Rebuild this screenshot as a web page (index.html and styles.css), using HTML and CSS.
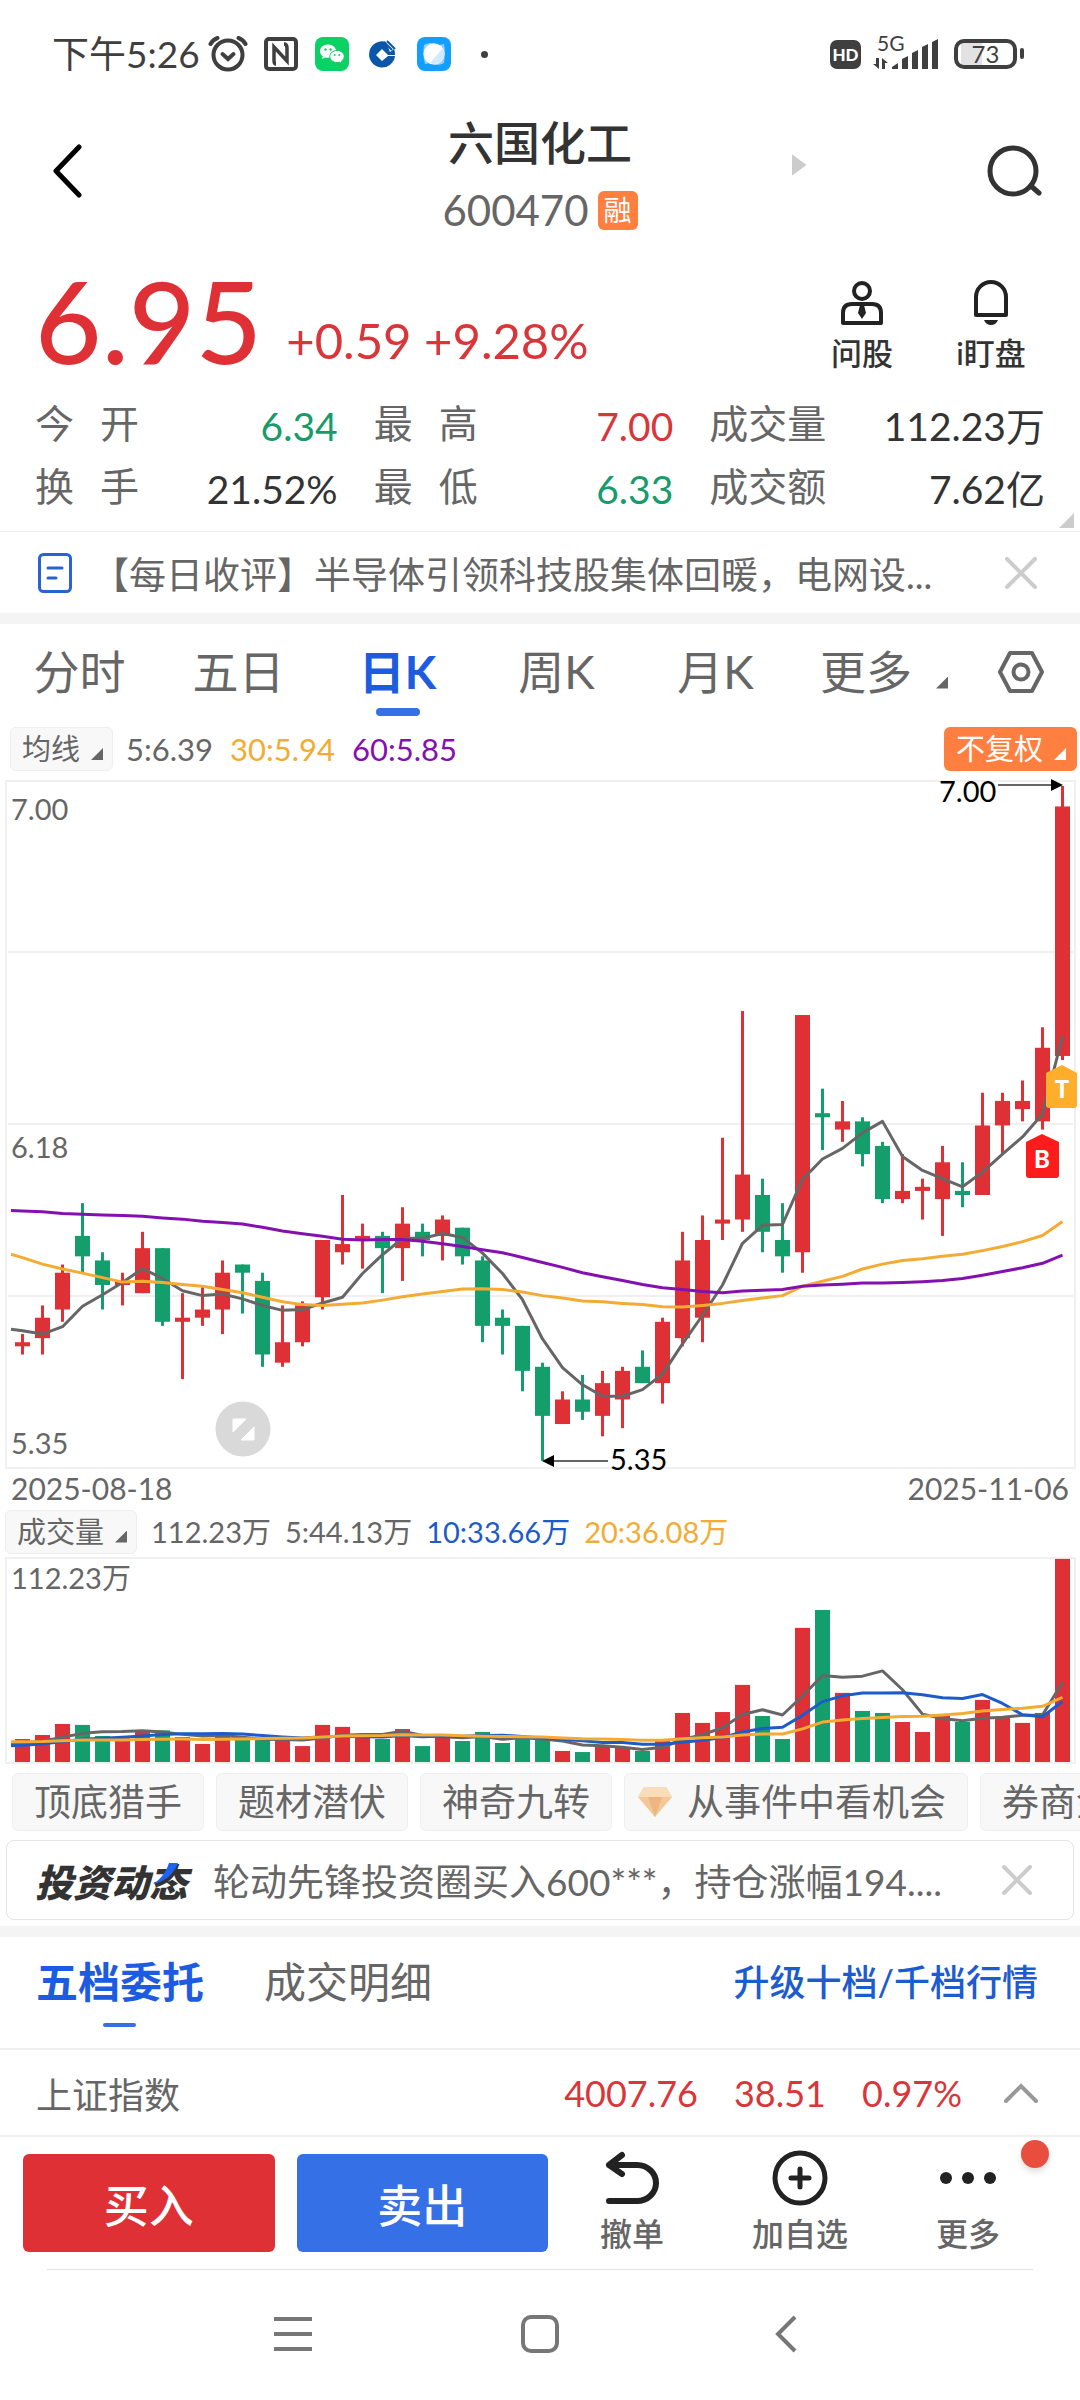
FILE: index.html
```
<!DOCTYPE html>
<html lang="zh-CN">
<head>
    <meta charset="UTF-8">
    <title>六国化工 600470</title>
    <meta name="viewport" content="width=device-width, initial-scale=1">
    <link rel="stylesheet" href="styles.css">
</head>
<body>
    <div class="status-bar">
        <span class="clock">下午5:26</span>
        <svg class="st-icon" viewBox="0 0 40 36" width="40" height="36" fill="none" stroke="#3f3f3f" stroke-width="4" stroke-linecap="round">
            <circle cx="20" cy="19" r="14.5"/>
            <path d="M14.5 18l5.5 5 5.5-5"/>
            <path d="M2.5 8C4 5 6.5 3 9.5 2M37.5 8C36 5 33.5 3 30.5 2"/>
        </svg>
        <svg class="st-icon nfc" viewBox="0 0 34 34" width="34" height="34" fill="none" stroke="#3f3f3f">
            <rect x="2" y="2" width="30" height="30" rx="3" stroke-width="4"/>
            <path d="M12 27c-2 0-2-2-2-4V10l13 14V12M20 7c2 0 3 1 3 4v13" stroke-width="3.5"/>
        </svg>
        <svg class="st-icon app" viewBox="0 0 34 34" width="34" height="34">
            <rect width="34" height="34" rx="8" fill="#0ad264"/>
            <path d="M13 7.5c-4.6 0-8 3-8 6.7 0 2 1 3.8 2.8 5L7 22l3.2-1.6c1 .2 1.8.4 2.9.4 4.5 0 8-3 8-6.7 0-3.6-3.5-6.6-8.1-6.6z" fill="#fff"/>
            <path d="M22 13.5c-4 0-7.2 2.6-7.2 6s3.2 6 7.2 6c.8 0 1.6-.1 2.3-.3L27 26.5l-.6-2.3c1.7-1.1 2.9-2.7 2.9-4.7 0-3.4-3.3-6-7.3-6z" fill="#fff" stroke="#0ad264"/>
            <g fill="#0ad264"><circle cx="10.5" cy="12.5" r="1.2"/><circle cx="15.7" cy="12.5" r="1.2"/><circle cx="19.7" cy="18" r="1"/><circle cx="24.3" cy="18" r="1"/></g>
        </svg>
        <svg class="st-icon app" viewBox="0 0 34 34" width="34" height="34">
            <path d="M20 5a13 13 0 1 0 9 14H22l-6 5-6-6 6-6 6 6h7A13 13 0 0 0 28 12l-4 3z" fill="#0a56a8"/>
            <path d="M18 5l8 8M21 4l8 8" stroke="#0a56a8" stroke-width="2"/>
        </svg>
        <svg class="st-icon app" viewBox="0 0 34 34" width="34" height="34">
            <rect width="34" height="34" rx="8" fill="#129fff"/>
            <path d="M7 8c6-3 12-2 15 0l5-1c1 5 1 10 0 19-5 3-11 2-14 0l-5 1C6 20 6 14 7 8z" fill="#8fd0ff"/>
            <circle cx="17" cy="17" r="10.5" fill="#fff"/>
            <path d="M26 11a10.5 10.5 0 0 1-13 15z" fill="#d2eaff"/>
        </svg>
        <span class="more-dot"></span>
        <span class="hd">HD</span>
        <div class="signal">
            <span>5G</span>
            <svg viewBox="0 0 68 32" width="68" height="32" fill="#3f3f3f">
                <path d="M4 20h3v11L1 26h3zM10 31V20l6 5h-3v6z"/>
                <path d="M20 29l6-4v6h-6zM30 21l6-3v13h-6zM40 15l6-3v19h-6zM50 9l6-3v25h-6zM60 4l6-3v30h-6z"/>
            </svg>
        </div>
        <span class="battery">73</span>
    </div>

    <header class="top-bar">
        <button class="icon-btn back" aria-label="返回">
            <svg viewBox="0 0 30 54" width="30" height="54" fill="none" stroke="#000" stroke-width="5" stroke-linecap="round" stroke-linejoin="round"><path d="M27 3L4 27l23 24"/></svg>
        </button>
        <div class="stock">
            <h1>六国化工</h1>
            <div class="code">600470<span class="badge">融</span></div>
            <span class="next"></span>
        </div>
        <button class="icon-btn" aria-label="搜索">
            <svg viewBox="0 0 56 52" width="56" height="52" fill="none" stroke="#333" stroke-width="5" stroke-linecap="round"><circle cx="27" cy="26" r="23"/><path d="M45 41l8 7"/></svg>
        </button>
    </header>

    <section class="quote">
        <div class="price-row">
            <span class="price">6.95</span>
            <span class="change">+0.59 +9.28%</span>
            <button class="tool">
                <svg viewBox="0 0 44 46" width="44" height="46" fill="none" stroke="#222" stroke-width="4" stroke-linejoin="round"><circle cx="22" cy="11" r="8"/><path d="M3 43V33q0-9 9-9h20q9 0 9 9v10z"/><path d="M20 25h4l2 8-4 6-4-6z" fill="#222" stroke="none"/></svg>
                问股
            </button>
            <button class="tool">
                <svg viewBox="0 0 44 46" width="44" height="46" fill="none" stroke="#222" stroke-width="4" stroke-linejoin="round"><path d="M7 35V17a15 15 0 0 1 30 0v18z"/><path d="M15 40h14q-2 5-7 5t-7-5z" fill="#222" stroke="none"/></svg>
                i盯盘
            </button>
        </div>
        <dl class="stats">
            <div><dt><i>今</i><i>开</i></dt><dd class="down">6.34</dd></div>
            <div><dt><i>最</i><i>高</i></dt><dd class="up">7.00</dd></div>
            <div><dt>成交量</dt><dd>112.23万</dd></div>
            <div><dt><i>换</i><i>手</i></dt><dd>21.52%</dd></div>
            <div><dt><i>最</i><i>低</i></dt><dd class="down">6.33</dd></div>
            <div><dt>成交额</dt><dd>7.62亿</dd></div>
        </dl>
        <span class="corner"></span>
    </section>

    <div class="news">
        <svg viewBox="0 0 34 40" width="34" height="40" fill="none" stroke="#2a62d4" stroke-width="3" stroke-linecap="round"><rect x="1.5" y="1.5" width="31" height="37" rx="4"/><path d="M10 15h14M10 25h8"/></svg>
        <a href="#">【每日收评】半导体引领科技股集体回暖，电网设...</a>
        <button class="icon-btn" aria-label="关闭">
            <svg viewBox="0 0 32 32" width="32" height="32" stroke="#ccc" stroke-width="4" stroke-linecap="round"><path d="M2 2l28 28M30 2L2 30"/></svg>
        </button>
    </div>

    <nav class="period">
        <a href="#">分时</a>
        <a href="#">五日</a>
        <a href="#" class="active">日K</a>
        <a href="#">周K</a>
        <a href="#">月K</a>
        <a href="#" class="more">更多<span class="tri"></span></a>
        <button class="icon-btn" aria-label="设置">
            <svg viewBox="0 0 48 44" width="48" height="44" fill="none" stroke="#666" stroke-width="4" stroke-linejoin="round"><path d="M13 3h22l10 19-10 19H13L3 22z"/><circle cx="24" cy="22" r="7.5"/></svg>
        </button>
    </nav>

    <div class="legend ma-legend">
        <button class="chip">均线<span class="tri"></span></button>
        <span>5:6.39</span>
        <span class="yellow">30:5.94</span>
        <span class="purple">60:5.85</span>
        <button class="adjust">不复权<span class="tri"></span></button>
    </div>

    <svg id="kline" class="chart" viewBox="0 0 1080 690"></svg>
    <div class="dates"><span>2025-08-18</span><span>2025-11-06</span></div>

    <div class="legend">
        <button class="chip">成交量<span class="tri"></span></button>
        <span>112.23万</span>
        <span>5:44.13万</span>
        <span class="blue">10:33.66万</span>
        <span class="yellow">20:36.08万</span>
    </div>
    <svg id="volume" class="chart" viewBox="0 0 1080 210"></svg>

    <div class="tags">
        <a href="#">顶底猎手</a>
        <a href="#">题材潜伏</a>
        <a href="#">神奇九转</a>
        <a href="#" class="gem">
            <svg viewBox="0 0 34 30" width="34" height="30"><path d="M6 0h22l6 10-17 20L0 10z" fill="#f3c797"/><path d="M6 0h22l6 10H0z" fill="#f9dcb8"/><path d="M10 10h14l-7 20z" fill="#edb67c"/></svg>
            从事件中看机会
        </a>
        <a href="#">券商金股</a>
    </div>

    <div class="feed">
        <b class="feed-logo">投资动<span>态<svg viewBox="0 0 28 22" width="28" height="22"><path d="M0 21C8 16 13 9 16 0h9C21 10 14 18 0 21z" fill="#1d62f0"/></svg></span></b>
        <a href="#">轮动先锋投资圈买入600***，持仓涨幅194....</a>
        <button class="icon-btn" aria-label="关闭">
            <svg viewBox="0 0 30 30" width="30" height="30" stroke="#ccc" stroke-width="4" stroke-linecap="round"><path d="M2 2l26 26M28 2L2 28"/></svg>
        </button>
    </div>

    <div class="order-tabs">
        <a href="#" class="active">五档委托</a>
        <a href="#">成交明细</a>
        <a href="#" class="upgrade">升级十档/千档行情</a>
    </div>

    <div class="index-row">
        <span class="name">上证指数</span>
        <span>4007.76</span>
        <span>38.51</span>
        <span>0.97%</span>
        <button class="icon-btn" aria-label="展开">
            <svg viewBox="0 0 34 20" width="34" height="20" fill="none" stroke="#999" stroke-width="4" stroke-linecap="round"><path d="M2 18L17 3l15 15"/></svg>
        </button>
    </div>

    <div class="actions">
        <button class="trade buy">买入</button>
        <button class="trade sell">卖出</button>
        <button class="act">
            <svg viewBox="0 0 56 56" width="56" height="56" fill="none" stroke="#222" stroke-width="6" stroke-linecap="round" stroke-linejoin="round"><path d="M18 5L5 15l13 9M5 15h28a19 18 0 0 1 0 36H5"/></svg>
            撤单
        </button>
        <button class="act">
            <svg viewBox="0 0 56 56" width="56" height="56" fill="none" stroke="#222" stroke-width="5" stroke-linecap="round"><circle cx="28" cy="28" r="25"/><path d="M28 19v18M19 28h18"/></svg>
            加自选
        </button>
        <button class="act">
            <svg viewBox="0 0 56 56" width="56" height="56" fill="#222"><circle cx="6" cy="28" r="6"/><circle cx="28" cy="28" r="6"/><circle cx="50" cy="28" r="6"/></svg>
            更多
        </button>
        <span class="red-dot"></span>
    </div>

    <div class="sys-nav">
        <svg viewBox="0 0 38 38" width="38" height="38" stroke="#777" stroke-width="4"><path d="M0 4h38M0 19h38M0 34h38"/></svg>
        <svg viewBox="0 0 38 38" width="38" height="38" fill="none" stroke="#777" stroke-width="4"><rect x="2" y="2" width="34" height="34" rx="8"/></svg>
        <svg viewBox="0 0 38 38" width="38" height="38" fill="none" stroke="#777" stroke-width="4"><path d="M27 2L10 19l17 17"/></svg>
    </div>

    <script src="chart.js"></script>
</body>
</html>
```
FILE: styles.css
```
body {
    margin: 0;
    background: #fff;
    color: #666;
    font-family: Lato, "Noto Sans CJK SC", sans-serif;
    font-size: 37px;
    overflow-x: hidden;
}
a {
    color: inherit;
    text-decoration: none;
}
button {
    border: 0;
    padding: 0;
    background: none;
    color: inherit;
    font: inherit;
}
svg {
    display: block;
    flex: none;
}
h1, dl, dt, dd {
    margin: 0;
}
i {
    font-style: normal;
}
.up { color: #d9363a; }
.down { color: #169b6b; }
.yellow { color: #f3ab33; }
.purple { color: #8510b0; }
.blue { color: #1d5bc9; }

.tri {
    display: inline-block;
    width: 12px;
    height: 12px;
    background: currentColor;
    clip-path: polygon(100% 0, 100% 100%, 0 100%);
}

/* status bar */
.status-bar {
    display: flex;
    align-items: center;
    height: 108px;
    padding: 0 63px 0 52px;
    color: #3f3f3f;
}
.clock {
    font-size: 37px;
    line-height: 48px;
}
.st-icon {
    margin-left: 8px;
}
.st-icon.nfc {
    margin-left: 16px;
}
.st-icon.app {
    margin-left: 17px;
}
.more-dot {
    width: 7px;
    height: 7px;
    margin-left: 30px;
    border-radius: 50%;
    background: #3f3f3f;
}
.hd {
    width: 31px;
    margin-left: auto;
    border-radius: 7px;
    background: #3f3f3f;
    color: #fff;
    font-size: 17px;
    font-weight: 900;
    line-height: 29px;
    text-align: center;
}
.signal {
    position: relative;
    margin: 0 14px 0 11px;
}
.signal span {
    position: absolute;
    top: -7px;
    left: 5px;
    font-size: 21px;
    line-height: 24px;
}
.battery {
    position: relative;
    box-sizing: border-box;
    width: 63px;
    border: 4px solid #3f3f3f;
    border-radius: 10px;
    background: linear-gradient(90deg, #fff 3px, #e2e2e2 3px, #e2e2e2 24px, #fff 24px);
    font-size: 24px;
    line-height: 22px;
    text-align: center;
}
.battery::after {
    content: "";
    position: absolute;
    top: 5px;
    right: -11px;
    width: 4px;
    height: 11px;
    border-radius: 2px;
    background: #3f3f3f;
}

/* title */
.top-bar {
    display: flex;
    align-items: center;
    justify-content: space-between;
    height: 138px;
    padding: 0 38px 4px 52px;
}
.top-bar .icon-btn {
    margin-bottom: 12px;
}
.top-bar .back {
    width: 42px;
}
.top-bar .back svg {
    margin-right: auto;
}
.stock {
    position: relative;
    text-align: center;
}
.stock h1 {
    color: #333;
    font-size: 46px;
    font-weight: 500;
    line-height: 66px;
}
.code {
    display: flex;
    align-items: center;
    gap: 9px;
    font-size: 42px;
    line-height: 68px;
}
.badge {
    width: 40px;
    border-radius: 6px;
    background: #ff7f40;
    color: #fff;
    font-size: 28px;
    line-height: 39px;
}
.next {
    position: absolute;
    top: 44px;
    left: calc(100% + 154px);
    width: 15px;
    height: 22px;
    background: #ccc;
    clip-path: polygon(0 0, 100% 50%, 0 100%);
}

/* quote */
.quote {
    position: relative;
    padding: 0 35px 13px;
    border-bottom: 1px solid #eee;
}
.price-row {
    display: flex;
    align-items: flex-end;
    height: 142px;
    box-sizing: border-box;
    padding: 0 18px 15px 0;
}
.price {
    color: #df3035;
    font-size: 115px;
    font-weight: 500;
    line-height: 116px;
}
.change {
    flex: 1;
    padding-left: 24px;
    color: #d9363a;
    font-size: 49px;
    line-height: 74px;
}
.tool {
    display: flex;
    flex-direction: column;
    align-items: center;
    gap: 3px;
    width: 72px;
    margin-left: 57px;
    color: #333;
    font-size: 31px;
    font-weight: 500;
    line-height: 48px;
    white-space: nowrap;
}
.stats {
    display: grid;
    grid-template-columns: 302fr 299fr 335fr;
    column-gap: 36px;
    font-size: 39px;
    line-height: 63px;
}
.stats div {
    display: flex;
    justify-content: space-between;
}
.stats dt {
    display: flex;
    gap: 26px;
}
.stats dd {
    padding-top: 5px;
    line-height: 58px;
}
.stats dd:not(.up):not(.down) {
    color: #333;
}
.corner {
    position: absolute;
    right: 6px;
    bottom: 3px;
    width: 15px;
    height: 15px;
    background: #ccc;
    clip-path: polygon(100% 0, 100% 100%, 0 100%);
}
.news {
    display: flex;
    align-items: center;
    height: 81px;
    padding: 0 43px 0 38px;
    border-bottom: 11px solid #f4f4f4;
}
.news a {
    flex: 1;
    margin-left: 20px;
    white-space: nowrap;
}

/* period tabs */
.period {
    display: flex;
    align-items: center;
    height: 95px;
    padding-right: 35px;
    font-size: 46px;
}
.period a {
    position: relative;
    flex: 159;
    line-height: 94px;
    text-align: center;
}
.period a.active {
    color: #1d5be0;
    font-weight: 700;
}
.period a.active::after {
    content: "";
    position: absolute;
    bottom: 3px;
    left: 50%;
    width: 44px;
    height: 8px;
    margin-left: -22px;
    border-radius: 4px;
    background: #3570e6;
}
.period a.more {
    flex: 178;
    padding-right: 24px;
}
.period .tri {
    margin-left: 24px;
}

/* indicator legends */
.legend {
    display: flex;
    align-items: center;
    gap: 14px;
    height: 49px;
    padding: 0 3px 0 5px;
    font-size: 29px;
    line-height: 44px;
}
.ma-legend {
    gap: 17px;
    height: 60px;
    padding-left: 10px;
}
.ma-legend > span {
    font-size: 31px;
}
.chip {
    padding: 0 9px 0 11px;
    border: 1px solid #eee;
    border-radius: 6px;
    background: #f8f8f8;
    line-height: 42px;
}
.ma-legend .chip {
    margin-right: -4px;
}
.legend .tri {
    margin-left: 11px;
}
.adjust {
    margin-left: auto;
    padding: 0 11px 0 12px;
    border-radius: 6px;
    background: #ff7f40;
    color: #fff;
}

/* charts */
.chart {
    width: 100%;
    height: auto;
    overflow: visible;
}
.chart text {
    fill: #666;
    font-size: 29px;
}
.chart text.mark {
    fill: #000;
}
.chart text.flag {
    fill: #fff;
    font-size: 24px;
    font-weight: 900;
    text-anchor: middle;
}
.dates {
    display: flex;
    justify-content: space-between;
    padding: 0 11px;
    font-size: 30px;
    line-height: 38px;
}

/* tags */
.tags {
    display: flex;
    gap: 12px;
    padding: 7px 0 9px 12px;
    overflow: hidden;
    white-space: nowrap;
}
.tags a {
    flex: none;
    padding: 0 21px;
    border: 1px solid #eee;
    border-radius: 6px;
    background: #f8f8f8;
    line-height: 56px;
}
.tags .gem {
    display: flex;
    align-items: center;
    gap: 15px;
    padding-left: 13px;
}
.feed {
    display: flex;
    align-items: center;
    height: 78px;
    margin: 0 6px 6px;
    padding: 0 41px 0 28px;
    border: 1px solid #e4e4e4;
    border-radius: 8px;
}
.feed a {
    flex: 1;
    margin-left: 26px;
    white-space: nowrap;
}
.feed-logo {
    color: #333;
    font-size: 38px;
    font-weight: 900;
    font-style: italic;
}
.feed-logo span {
    position: relative;
}
.feed-logo svg {
    position: absolute;
    top: 4px;
    left: 4px;
}

/* orders */
.order-tabs {
    display: flex;
    height: 111px;
    padding: 0 42px 0 36px;
    border-top: 11px solid #f4f4f4;
    border-bottom: 2px solid #f0f0f0;
    font-size: 42px;
    line-height: 90px;
}
.order-tabs a {
    position: relative;
    margin-right: 60px;
}
.order-tabs .active {
    color: #1d5be0;
    font-weight: 700;
}
.order-tabs .active::after {
    content: "";
    position: absolute;
    top: 86px;
    left: 50%;
    width: 33px;
    height: 4px;
    margin-left: -17px;
    border-radius: 2px;
    background: #3570e6;
}
.order-tabs .upgrade {
    margin: 0 0 0 auto;
    color: #1d5bd0;
    font-size: 36px;
    font-weight: 500;
}
.index-row {
    display: flex;
    align-items: center;
    gap: 36px;
    height: 85px;
    padding: 0 42px 0 36px;
    border-bottom: 2px solid #f0f0f0;
    color: #d9363a;
    font-size: 36px;
}
.index-row .name {
    margin-right: auto;
    color: #666;
}
.index-row .icon-btn {
    margin-left: 6px;
}

/* bottom bar */
.actions {
    position: relative;
    display: flex;
    height: 98px;
    padding: 17px 28px 17px 23px;
}
.trade {
    flex: 1;
    border-radius: 6px;
    color: #fff;
    font-size: 45px;
    font-weight: 500;
}
.buy {
    margin-right: 22px;
    background: #df3035;
}
.sell {
    background: #3570e6;
}
.act {
    display: flex;
    flex-direction: column;
    align-items: center;
    width: 168px;
    margin-top: -4px;
    font-size: 32px;
    font-weight: 500;
    line-height: 56px;
    white-space: nowrap;
}
.red-dot {
    position: absolute;
    top: 3px;
    right: 31px;
    width: 28px;
    height: 28px;
    border-radius: 50%;
    background: #e84d3d;
    box-shadow: 0 4px 6px #0002;
}
.sys-nav {
    display: flex;
    align-items: center;
    justify-content: center;
    gap: 209px;
    height: 128px;
    margin: 0 47px;
    border-top: 1px solid #e2e2e2;
}
```
FILE: chart.js
```
// [open, close, high, low] in fen, one row per trading day
const days = [
    [563, 564, 566, 561], [565, 570, 573, 561], [572, 581, 583, 569], [590, 585, 598, 581],
    [584, 578, 586, 572], [578, 579, 581, 573], [576, 587, 591, 576], [587, 569, 587, 568],
    [569, 570, 576, 555], [570, 572, 578, 568], [572, 581, 584, 566], [583, 581, 583, 571],
    [579, 561, 581, 558], [559, 564, 573, 558], [564, 573, 574, 563], [575, 589, 589, 572],
    [586, 588, 600, 583], [590, 590, 593, 582], [590, 587, 591, 576], [587, 593, 597, 579],
    [591, 589, 593, 585], [590, 594, 595, 584], [592, 585, 592, 583], [584, 568, 585, 564],
    [570, 568, 572, 561], [568, 557, 568, 552], [558, 546, 559, 535], [544, 550, 552, 544],
    [550, 547, 556, 545], [546, 554, 557, 541], [550, 557, 558, 543], [558, 554, 562, 554],
    [554, 569, 570, 549], [565, 584, 591, 563], [570, 589, 595, 564], [593, 594, 614, 589],
    [594, 605, 645, 591], [600, 591, 604, 586], [589, 585, 598, 581], [586, 644, 644, 581],
    [620, 619, 626, 611], [616, 618, 623, 613], [618, 610, 619, 607], [612, 599, 613, 598],
    [599, 601, 610, 598], [601, 602, 604, 594], [599, 608, 612, 590], [601, 600, 608, 597],
    [600, 617, 625, 600], [617, 623, 625, 610], [621, 623, 628, 618], [618, 636, 641, 616],
    [634, 695, 700, 633]
];
const vols = [
    12.7, 14.9, 21, 20.5, 14.4, 13.3, 17.3, 17.5, 13.8, 10, 14.7, 12.3, 12.3, 12.7, 8.8, 20.5, 19.4, 14.4,
    12.7, 18.2, 8.8, 15.5, 11.6, 16.6, 10.5, 12.7, 12.3, 6.1, 5.5, 8.3, 8.3, 6.1, 12.3, 27.1, 21.6, 27.6,
    42.6, 25.4, 12.7, 74.1, 84, 38.2, 28.2, 27.1, 22.1, 16.6, 26, 22.1, 34.3, 24.9, 21.6, 27.1, 112.2
];
// days before the first visible one, for the averages
const closesBefore = [574, 572, 560, 564];
const volsBefore = [13, 13, 13, 13, 13, 13, 13, 13, 14, 14, 8, 8, 8, 8, 8, 10, 10, 10, 10];

const ma30 = [
    584.7, 583.1, 581.9, 580.9, 579.8, 578.7, 578.9, 578.6, 578.1, 577.7, 576.9, 576.1, 575, 573.9, 573.2,
    573, 573.3, 573.6, 574.3, 575.1, 575.8, 576.4, 577, 577.1, 576.9, 576.3, 575.4, 574.8, 574.1, 573.9,
    573.5, 573.2, 572.7, 572.6, 573, 573.5, 574.2, 574.8, 575.4, 577.7, 578.9, 580.1, 581.9, 583.1, 584,
    584.4, 585, 585.5, 586.4, 587.4, 588.6, 590.1, 593.5
];
const ma60 = [
    596.1, 595.9, 595.5, 595.3, 595.1, 595, 594.8, 594.4, 594.1, 593.6, 593.3, 592.9, 592.1, 591.2, 590.5,
    589.9, 589.2, 589, 589.1, 589.1, 588.7, 588.1, 587.4, 586.6, 585.9, 584.7, 583.5, 582.3, 581, 580,
    579.1, 578.1, 577.3, 576.9, 576.4, 576.1, 576.5, 576.7, 576.9, 577.7, 578, 578.2, 578.5, 578.5, 578.6,
    578.8, 579.1, 579.6, 580.4, 581.3, 582.2, 583.3, 585.3
];

const RED = '#df3035';
const GREEN = '#149e6c';

const x = i => 22.5 + i * 20;
const priceY = p => 7 + (700 - p) * 4.09;
const volY = v => 206 - v * 1.81;

function average(before, values, n) {
    const all = before.concat(values);
    return values.map((v, i) => {
        const end = i + before.length + 1;
        return all.slice(end - n, end).reduce((a, b) => a + b, 0) / n;
    });
}

function line(values, y, color) {
    const first = y(values[0]) - (y(values[1]) - y(values[0])) / 2;
    const points = ['11,' + first].concat(values.map((v, i) => x(i) + ',' + y(v)));
    return `<polyline points="${points.join(' ')}" fill="none" stroke="${color}" stroke-width="3" stroke-linejoin="round"/>`;
}

function drawKline() {
    let s = '<rect x="6" y="2" width="1069" height="687" fill="none" stroke="#f0f0f0" stroke-width="2"/>';
    for (const y of [173, 345, 517]) {
        s += `<path d="M8 ${y}H1073" stroke="#f0f0f0" stroke-width="2"/>`;
    }
    days.forEach(([open, close, high, low], i) => {
        const color = close >= open ? RED : GREEN;
        const top = priceY(Math.max(open, close));
        const h = Math.max(3, Math.abs(open - close) * 4.09);
        s += `<path d="M${x(i)} ${priceY(high)}V${priceY(low)}" stroke="${color}" stroke-width="3"/>`;
        s += `<rect x="${x(i) - 7.5}" y="${top}" width="15" height="${h}" fill="${color}"/>`;
    });
    s += line(average(closesBefore, days.map(d => d[1]), 5), priceY, '#666');
    s += line(ma30, priceY, '#f3ab33');
    s += line(ma60, priceY, '#8510b0');
    // high and low marks
    s += '<path d="M998 6H1052M553 682H608" stroke="#666" stroke-width="2"/>';
    s += '<path d="M1051 0l12 6-12 6zM554 676l-12 6 12 6z"/>';
    s += '<text class="mark" x="939" y="23">7.00</text><text class="mark" x="610" y="691">5.35</text>';
    s += '<text x="11" y="41">7.00</text><text x="11" y="379">6.18</text><text x="11" y="675">5.35</text>';
    // trade flags
    s += '<path d="M1046 294l16-8 15 8v32q0 3-3 3h-25q-3 0-3-3z" fill="#ffae2b"/><text class="flag" x="1062" y="319">T</text>';
    s += '<path d="M1026 363l16-8 17 8v33q0 3-3 3h-27q-3 0-3-3z" fill="#fc1c1c"/><text class="flag" x="1042" y="389">B</text>';
    // expand button
    s += '<circle cx="243" cy="650" r="27.5" fill="#d9d9d9"/><path d="M233 640h13l-13 13zM254 661h-13l13-13z" fill="#fff" stroke="#fff" stroke-linejoin="round"/>';
    document.getElementById('kline').innerHTML = s;
}

function drawVolume() {
    let s = '<rect x="6" y="2" width="1069" height="205" fill="none" stroke="#f0f0f0" stroke-width="2"/>';
    vols.forEach((v, i) => {
        const color = days[i][1] >= days[i][0] ? RED : GREEN;
        s += `<rect x="${x(i) - 7.5}" y="${volY(v)}" width="15" height="${v * 1.81}" fill="${color}"/>`;
    });
    s += line(average(volsBefore, vols, 5), volY, '#666');
    s += line(average(volsBefore, vols, 10), volY, '#1d5bc9');
    s += line(average(volsBefore, vols, 20), volY, '#f3ab33');
    s += '<text x="11" y="33">112.23万</text>';
    document.getElementById('volume').innerHTML = s;
}

drawKline();
drawVolume();
```
